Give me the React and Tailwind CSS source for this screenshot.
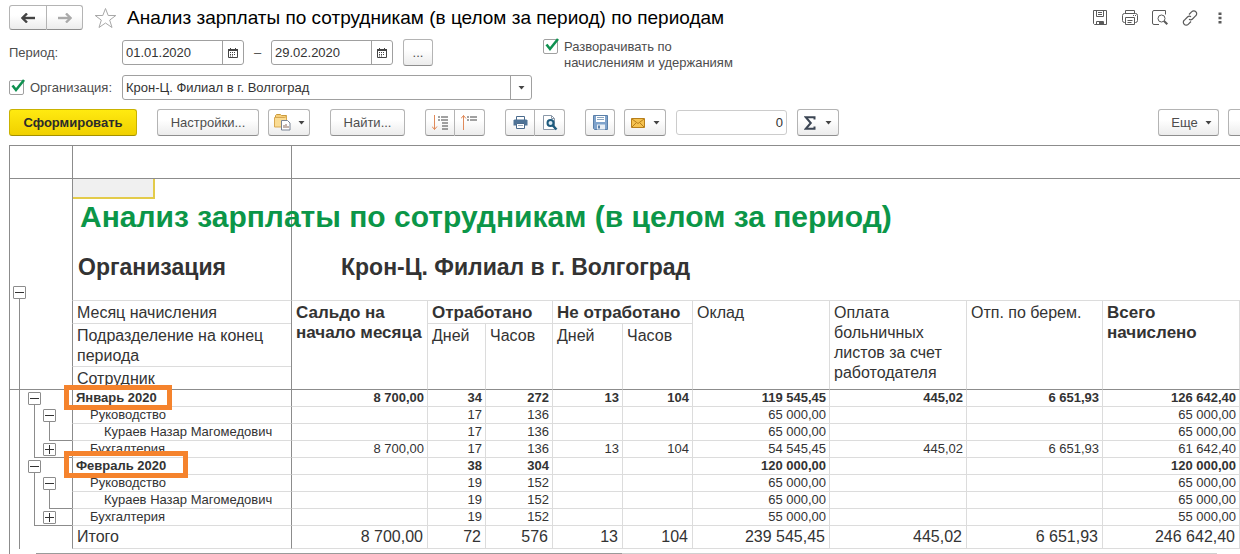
import React from "react";

const rows = [
  { name: "Январь 2020", level: 0, mark: "w-[108px] h-[25px] -top-[5px]", values: ["8 700,00", "34", "272", "13", "104", "119 545,45", "445,02", "6 651,93", "126 642,40"] },
  { name: "Руководство", level: 1, open: true, values: ["", "17", "136", "", "", "65 000,00", "", "", "65 000,00"] },
  { name: "Кураев Назар Магомедович", level: 2, values: ["", "17", "136", "", "", "65 000,00", "", "", "65 000,00"] },
  { name: "Бухгалтерия", level: 1, open: false, values: ["8 700,00", "17", "136", "13", "104", "54 545,45", "445,02", "6 651,93", "61 642,40"] },
  { name: "Февраль 2020", level: 0, mark: "w-[124px] h-[27px] -top-[7px]", values: ["", "38", "304", "", "", "120 000,00", "", "", "120 000,00"] },
  { name: "Руководство", level: 1, open: true, values: ["", "19", "152", "", "", "65 000,00", "", "", "65 000,00"] },
  { name: "Кураев Назар Магомедович", level: 2, values: ["", "19", "152", "", "", "65 000,00", "", "", "65 000,00"] },
  { name: "Бухгалтерия", level: 1, open: false, values: ["", "19", "152", "", "", "55 000,00", "", "", "55 000,00"] },
];

const totals = ["8 700,00", "72", "576", "13", "104", "239 545,45", "445,02", "6 651,93", "246 642,40"];

const indent = ["pl-[3px] font-bold", "pl-[17px]", "pl-[31px]"];

const Button = ({ primary, className = "", children, ...rest }) => (
  <button
    type="button"
    className={`flex shrink-0 items-center justify-center rounded-[3px] border bg-linear-to-b ${
      primary
        ? "border-[#c9b200] border-b-[#a39000] from-[#ffea10] to-[#f0d000] font-bold text-[#2b2b2b]"
        : "border-[#b4b4b4] border-b-[#8e8e8e] from-white from-40% to-[#ececec] text-[#4d4d4d]"
    } ${className}`}
    {...rest}
  >
    {children}
  </button>
);

const Arrow = () => (
  <svg width="7" height="4" viewBox="0 0 7 4" className="shrink-0">
    <path d="M0.5 0h6L3.5 3.6z" fill="#444" />
  </svg>
);

const Check = ({ id }) => (
  <span className="relative block size-[15px] shrink-0">
    <input
      id={id}
      type="checkbox"
      defaultChecked
      className="peer block size-[15px] appearance-none rounded-[2px] border border-[#a0a0a0] bg-white"
    />
    <svg
      className="pointer-events-none invisible absolute -top-px left-0.5 peer-checked:visible"
      width="15"
      height="14"
      viewBox="0 0 15 14"
    >
      <path d="M1.5 6.5l3.5 4.5L13 1" fill="none" stroke="#0f9150" strokeWidth="2.6" />
    </svg>
  </span>
);

const DateField = ({ label, value }) => (
  <div className="flex h-[25px] w-[122px] shrink-0 rounded-[3px] border border-[#a0a0a0] bg-white">
    <input aria-label={label} defaultValue={value} className="min-w-0 flex-1 pl-[3px] text-[#333] outline-none" />
    <button type="button" aria-label="Календарь" className="flex w-[21px] items-center justify-center border-l border-[#a0a0a0]">
      <svg width="10" height="10" viewBox="0 0 10 10">
        <path d="M0.5 1.5h9v8h-9z" fill="none" stroke="#444" />
        <path d="M0 1h10v2H0zM2 0h1v2H2zM7 0h1v2H7z" fill="#444" />
        <path d="M2 4.5h6M2 6.5h6" stroke="#444" strokeDasharray="1 1" />
        <path d="M2 8h4" stroke="#444" strokeDasharray="1 1" />
      </svg>
    </button>
  </div>
);

const Toggle = ({ open = true }) => (
  <button
    type="button"
    aria-label={open ? "Свернуть" : "Развернуть"}
    className="flex size-[13px] shrink-0 items-center justify-center rounded-[1px] border border-[#8c8c8c] bg-white"
  >
    <svg width="9" height="9" viewBox="0 0 9 9">
      <path d={open ? "M0 4.5h9" : "M0 4.5h9M4.5 0v9"} stroke="#333" />
    </svg>
  </button>
);

// vertical guide of one nesting level
const Line = () => (
  <span className="flex w-[15px] shrink-0 justify-center">
    <span className="h-full w-px bg-[#8c8c8c]" />
  </span>
);

const Node = () => (
  <span className="flex w-[15px] shrink-0 flex-col items-center pt-[2px]">
    <Toggle />
    <span className="w-px flex-1 bg-[#8c8c8c]" />
  </span>
);

const Corner = ({ children }) => (
  <span className="ml-[7px] flex flex-1 border-b border-l border-[#8c8c8c]">{children}</span>
);

const Tree = ({ row }) => (
  <div className="flex h-[17px] pl-[2px]">
    <Line />
    {row.level === 0 && <Node />}
    {row.level === 1 && row.open && (
      <>
        <Line />
        <Node />
      </>
    )}
    {row.level === 1 && !row.open && (
      <Corner>
        <span className="pl-[8px] pt-[2px]">
          <Toggle open={false} />
        </span>
      </Corner>
    )}
    {row.level === 2 && (
      <>
        <Line />
        <Corner />
      </>
    )}
  </div>
);

const HeaderIcons = () => (
  <div className="ml-auto flex items-center gap-[14px] pr-3 text-[#5a5a5a]">
    <button type="button" aria-label="Сохранить">
      <svg width="16" height="16" viewBox="0 0 16 16" fill="none" stroke="currentColor">
        <path d="M1.5 0.5h13v14h-12l-1-1z" />
        <path d="M4.5 0.5v6h7v-6M6 2.5h4M6 4.5h4M4.5 14.5v-3h7v3" />
        <path d="M7 12h4v2H7z" fill="currentColor" stroke="none" />
      </svg>
    </button>
    <button type="button" aria-label="Печать">
      <svg width="16" height="16" viewBox="0 0 16 16" fill="none" stroke="currentColor">
        <path d="M3.5 3.5v-3h9v3M3.5 12.5h-1q-2 0-2-2v-5q0-2 2-2h11q2 0 2 2v5q0 2-2 2h-1" />
        <path d="M3.5 7.5h9v7h-9zM5.5 10.5h5M5.5 12.5h4M11 5.5h1M13 5.5h1" />
      </svg>
    </button>
    <button type="button" aria-label="Просмотр">
      <svg width="16" height="16" viewBox="0 0 16 16" fill="none" stroke="currentColor">
        <path d="M7 14.5H2q-1.5 0-1.5-1.5v-11q0-1.5 1.5-1.5h11.5v4" />
        <circle cx="9.5" cy="8.5" r="3.5" />
        <path d="M12 11l3.300 3.300" strokeWidth="2" />
      </svg>
    </button>
    <button type="button" aria-label="Ссылка">
      <svg width="16" height="16" viewBox="0 0 16 16" fill="none" stroke="currentColor" strokeWidth="1.2">
        <path d="M7 4.500L9.800 1.700a2.700 2.700 0 0 1 4 0a2.700 2.700 0 0 1 0 4L10.500 9a2.700 2.700 0 0 1-3.500 0.300" />
        <path d="M9 11.500L6.200 14.300a2.700 2.700 0 0 1-4 0a2.700 2.700 0 0 1 0-4L5.500 7a2.700 2.700 0 0 1 3.500-0.300" />
      </svg>
    </button>
    <button type="button" aria-label="Меню" className="flex w-4 justify-center">
      <svg width="4" height="12" viewBox="0 0 4 12" fill="currentColor">
        <path d="M0.500 0.500h3v2.500h-3zM0.500 4.800h3v2.500h-3zM0.500 9h3v2.500h-3z" />
      </svg>
    </button>
  </div>
);

const Toolbar = () => (
  <div className="flex items-center">
    <Button primary className="h-[27px] w-32">
      Сформировать
    </Button>
    <Button className="ml-5 h-[27px] w-[102px]">Настройки...</Button>
    <Button aria-label="Варианты отчета" className="ml-[9px] h-[27px] w-[42px] gap-[7px]">
      <svg width="17" height="17" viewBox="0 0 17 17">
        <path d="M1.500 3V1.500l1-1h4l1 1h5V4h-11z" fill="#f7cf7a" stroke="#c99a3d" />
        <path d="M0.500 3.500h10l2-1v10.500h-12z" fill="#fadc94" stroke="#d8a850" />
        <path d="M7.500 6.500h6l2.500 2.500v7H7.500z" fill="#fff" stroke="#7a8494" />
        <path d="M10 14v-3M12 14v-4M14 14v-2" stroke="#8a6a5a" />
      </svg>
      <Arrow />
    </Button>
    <Button className="ml-5 h-[27px] w-[75px]">Найти...</Button>
    <div className="ml-5 flex">
      <Button aria-label="Развернуть группы" className="h-[27px] w-[30px] rounded-r-none">
        <svg width="17" height="16" viewBox="0 0 17 16" fill="none">
          <path d="M2.500 0v14.500M0 11.500l2.500 3l2.500-3" stroke="#e08a5a" />
          <path d="M6 2h2M6 5h2" stroke="#444" />
          <path d="M9 2h7M9 5h7M10 8h6M10 11h6M10 14h6" stroke="#444" />
        </svg>
      </Button>
      <Button aria-label="Свернуть группы" className="h-[27px] w-[30px] rounded-l-none border-l-0">
        <svg width="17" height="16" viewBox="0 0 17 16" fill="none">
          <path d="M2.500 0.500V15M0 3.500l2.500-3l2.500 3" stroke="#e08a5a" />
          <path d="M6 2h2M6 5h2" stroke="#444" />
          <path d="M9 2h7M9 5h7" stroke="#444" />
        </svg>
      </Button>
    </div>
    <div className="ml-5 flex">
      <Button aria-label="Печать" className="h-[27px] w-[30px] rounded-r-none">
        <svg width="15" height="15" viewBox="0 0 15 15">
          <path d="M3.500 1.500h8v4h-8z" fill="#fff" stroke="#4a6a8c" />
          <path d="M1.500 4.500h12l1 1v5h-14v-5z" fill="#4f7396" />
          <path d="M3.500 8.500h8v5h-8z" fill="#fff" stroke="#4a6a8c" />
          <path d="M5 10.500h5" stroke="#9ab" />
        </svg>
      </Button>
      <Button aria-label="Предварительный просмотр" className="h-[27px] w-[30px] rounded-l-none border-l-0">
        <svg width="16" height="16" viewBox="0 0 16 16">
          <path d="M1.500 0.500h8l3 3v11h-11z" fill="#fff" stroke="#8a98a8" />
          <path d="M9.500 0.500v3h3" fill="none" stroke="#8a98a8" />
          <circle cx="8.500" cy="8" r="3" fill="#dcebf5" stroke="#1d5a7d" strokeWidth="2" />
          <path d="M10.800 10.500l3.700 4" stroke="#1d5a7d" strokeWidth="2.500" />
        </svg>
      </Button>
    </div>
    <Button aria-label="Сохранить" className="ml-5 h-[27px] w-[30px]">
      <svg width="15" height="15" viewBox="0 0 15 15">
        <path d="M0.500 0.500h14v14h-13l-1-1z" fill="#7fa3cc" stroke="#5a7fa8" />
        <path d="M3 1h9v6H3z" fill="#fff" />
        <path d="M4 2.500h7M4 4.500h7" stroke="#8aa5bf" />
        <path d="M4 9.500h8v5H4z" fill="#e8eef5" />
        <path d="M5 10.500h2v3H5z" fill="#5a7fa8" />
      </svg>
    </Button>
    <Button aria-label="Отправить" className="ml-[9px] h-[27px] w-[42px] gap-[8px]">
      <svg width="14" height="10" viewBox="0 0 14 10">
        <path d="M0.500 0.500h13v9H0.500z" fill="#f5c250" stroke="#b87f1a" />
        <path d="M1 1l6 4.500L13 1M1 9l4-4M13 9l-4-4" fill="none" stroke="#b87f1a" />
      </svg>
      <Arrow />
    </Button>
    <input
      aria-label="Сумма"
      defaultValue="0"
      className="ml-[10px] h-[25px] w-[111px] rounded-[3px] border border-[#ccc] pr-[3px] text-right text-[#333] outline-none"
    />
    <Button aria-label="Сумма ячеек" className="ml-[10px] h-[27px] w-[42px] gap-[9px]">
      <svg width="12" height="14" viewBox="0 0 12 14">
        <path d="M10.500 3.500V1.200H1.800l5 5.800l-5 5.800h8.700v-2.300" fill="none" stroke="#3c4654" strokeWidth="2" />
      </svg>
      <Arrow />
    </Button>
    <Button className="ml-auto h-[27px] w-[61px] gap-[7px] pl-[6px]">
      Еще
      <Arrow />
    </Button>
    <Button aria-label="Справка" className="ml-[9px] h-[27px] w-3 rounded-r-none border-r-0" />
  </div>
);

const head = "border-r border-b border-[#dcdcdc] px-1 pt-[2px] text-left align-top font-normal leading-5";

const Report = () => (
  <table className="w-full table-fixed border-separate border-spacing-0 text-[#333]">
    <colgroup>
      <col className="w-[63px]" />
      <col className="w-[219px]" />
      <col className="w-[137px]" />
      <col className="w-[58px]" />
      <col className="w-[67px]" />
      <col className="w-[70px]" />
      <col className="w-[70px]" />
      <col className="w-[137px]" />
      <col className="w-[137px]" />
      <col className="w-[136px]" />
      <col className="w-[137px]" />
    </colgroup>
    <thead className="text-base">
      <tr className="h-[34px]">
        <td className="border-y border-l border-[#8c8c8c]" />
        <td className="border-y border-l border-[#8c8c8c]" />
        <td colSpan={9} className="border-y border-l border-[#8c8c8c]" />
      </tr>
      <tr className="h-5">
        <td className="border-l border-[#8c8c8c]" />
        <td className="border-l border-[#8c8c8c] p-0">
          <div className="h-5 w-[82px] border-r-2 border-b-2 border-[#e3cb4a] bg-[#f0f0f0]" />
        </td>
        <td colSpan={9} className="border-l border-[#8c8c8c]" />
      </tr>
      <tr className="h-9">
        <td className="border-l border-[#8c8c8c]" />
        <td className="border-l border-[#8c8c8c] p-0 pl-[7px]">
          <h2 className="w-0 text-[30px] leading-9 font-bold whitespace-nowrap text-[#0b9648]">
            Анализ зарплаты по сотрудникам (в целом за период)
          </h2>
        </td>
        <td colSpan={9} className="border-l border-[#8c8c8c]" />
      </tr>
      <tr className="h-[66px] text-[23px] font-bold">
        <td className="border-l border-[#8c8c8c] p-0">
          <div className="ml-[2px] flex h-[66px] w-[15px] flex-col items-center justify-end">
            <Toggle />
            <span className="h-[2px] w-px bg-[#8c8c8c]" />
          </div>
        </td>
        <td className="border-b border-l border-b-[#dcdcdc] border-l-[#8c8c8c] p-0 pl-[5px]">Организация</td>
        <td colSpan={9} className="border-b border-l border-b-[#dcdcdc] border-l-[#8c8c8c] p-0 pl-[49px]">
          Крон-Ц. Филиал в г. Волгоград
        </td>
      </tr>
      <tr className="h-[23px]">
        <td rowSpan={3} className="border-b border-l border-[#8c8c8c] p-0">
          <div className="flex h-[88px] pl-[2px]">
            <Line />
          </div>
        </td>
        <th className={`${head} border-r-0 border-l border-l-[#8c8c8c]`}>Месяц начисления</th>
        <th rowSpan={3} className={`${head} border-l border-b-[#8c8c8c] border-l-[#8c8c8c]`}>
          <b className="text-[17px]">Сальдо на начало месяца</b>
        </th>
        <th colSpan={2} className={head}>
          <b className="text-[17px]">Отработано</b>
        </th>
        <th colSpan={2} className={`${head} whitespace-nowrap`}>
          <b className="text-[17px]">Не отработано</b>
        </th>
        <th rowSpan={3} className={`${head} border-b-[#8c8c8c]`}>Оклад</th>
        <th rowSpan={3} className={`${head} border-b-[#8c8c8c]`}>Оплата больничных листов за счет работодателя</th>
        <th rowSpan={3} className={`${head} border-b-[#8c8c8c]`}>Отп. по берем.</th>
        <th rowSpan={3} className={`${head} border-b-[#8c8c8c]`}>
          <b className="text-[17px]">Всего начислено</b>
        </th>
      </tr>
      <tr className="h-[43px]">
        <th className={`${head} border-r-0 border-l border-l-[#8c8c8c]`}>Подразделение на конец периода</th>
        <th rowSpan={2} className={`${head} border-b-[#8c8c8c]`}>Дней</th>
        <th rowSpan={2} className={`${head} border-b-[#8c8c8c]`}>Часов</th>
        <th rowSpan={2} className={`${head} border-b-[#8c8c8c]`}>Дней</th>
        <th rowSpan={2} className={`${head} border-b-[#8c8c8c]`}>Часов</th>
      </tr>
      <tr className="h-[23px]">
        <th className={`${head} border-r-0 border-l border-b-[#8c8c8c] border-l-[#8c8c8c]`}>Сотрудник</th>
      </tr>
    </thead>
    <tbody className="text-[13px] leading-4">
      {rows.map((row, index) => (
        <tr key={index} className="h-[17px]">
          <td className="border-l border-[#8c8c8c] p-0">
            <Tree row={row} />
          </td>
          <td
            className={`relative border-b border-l border-b-[#dcdcdc] border-l-[#8c8c8c] py-0 pr-0 whitespace-nowrap ${indent[row.level]}`}
          >
            {row.name}
            {row.mark && (
              <span className={`pointer-events-none absolute -left-[9px] z-10 border-[5px] border-[#f5832d] ${row.mark}`} />
            )}
          </td>
          {row.values.map((value, i) => (
            <td
              key={i}
              className={`border-r border-b border-[#dcdcdc] py-0 pr-[3px] pl-0 text-right ${
                i === 0 ? "border-l border-l-[#8c8c8c]" : ""
              } ${row.level === 0 ? "font-bold" : ""}`}
            >
              {value}
            </td>
          ))}
        </tr>
      ))}
    </tbody>
    <tfoot className="text-base leading-5">
      <tr className="h-[23px]">
        <td className="border-l border-[#8c8c8c] p-0">
          <div className="flex h-[23px] pl-[2px]">
            <Line />
          </div>
        </td>
        <td className="border-b border-l border-b-[#dcdcdc] border-l-[#8c8c8c] py-0 pl-1">Итого</td>
        {totals.map((value, i) => (
          <td
            key={i}
            className={`border-r border-b border-[#dcdcdc] py-0 pr-1 pl-0 text-right whitespace-nowrap ${
              i === 0 ? "border-l border-l-[#8c8c8c]" : ""
            }`}
          >
            {value}
          </td>
        ))}
      </tr>
    </tfoot>
  </table>
);

const App = () => {
  return (
    <div className="overflow-hidden bg-white pt-[5px] pl-[9px] font-['Liberation_Sans',Arial,sans-serif] text-[13px] leading-4 text-[#4d4d4d]">
      <div className="flex flex-col gap-[9px]">
        <header className="flex h-[25px] items-center">
          <div className="flex">
            <Button aria-label="Назад" className="h-[25px] w-[38px] rounded-r-none">
              <svg width="14" height="10" viewBox="0 0 14 10">
                <path d="M14 5H2" stroke="#444" strokeWidth="2.400" />
                <path d="M6 0.500L1.500 5L6 9.500" fill="none" stroke="#444" strokeWidth="2.400" />
              </svg>
            </Button>
            <Button aria-label="Вперед" className="h-[25px] w-[36px] rounded-l-none border-l-0">
              <svg width="14" height="10" viewBox="0 0 14 10">
                <path d="M0 5h12" stroke="#aaa" strokeWidth="2.400" />
                <path d="M8 0.500L12.500 5L8 9.500" fill="none" stroke="#aaa" strokeWidth="2.400" />
              </svg>
            </Button>
          </div>
          <button type="button" aria-label="В избранное" className="ml-[11px]">
            <svg width="23" height="22" viewBox="0 0 23 22">
              <path
                d="M11.500 1.500l2.700 7h7.600l-6.100 4.600l2.300 7.400l-6.500-4.500L5 20.500l2.300-7.400L1.200 8.500h7.600z"
                fill="#fff"
                stroke="#a8a8a8"
              />
            </svg>
          </button>
          <h1 className="ml-[10px] text-[19px] leading-6 whitespace-nowrap text-black">
            Анализ зарплаты по сотрудникам (в целом за период) по периодам
          </h1>
          <HeaderIcons />
        </header>

        <div className="flex h-[27px] items-center">
          <span className="w-[113px]">Период:</span>
          <DateField label="Начало периода" value="01.01.2020" />
          <span className="w-[27px] text-center">–</span>
          <DateField label="Конец периода" value="29.02.2020" />
          <Button aria-label="Выбрать период" className="ml-[10px] h-[27px] w-[30px]">...</Button>
          <div className="ml-[110px] flex gap-[6px] self-start">
            <Check id="expand" />
            <label htmlFor="expand" className="whitespace-nowrap">
              Разворачивать по
              <br />
              начислениям и удержаниям
            </label>
          </div>
        </div>

        <div className="flex h-[25px] items-center">
          <div className="flex w-[113px] items-center gap-[6px]">
            <Check id="org-on" />
            <label htmlFor="org-on">Организация:</label>
          </div>
          <div className="relative h-[25px] w-[410px]">
            <select
              aria-label="Организация"
              className="h-[25px] w-full appearance-none rounded-[3px] border border-[#a0a0a0] bg-white pl-[3px] text-[#333] outline-none"
            >
              <option>Крон-Ц. Филиал в г. Волгоград</option>
            </select>
            <span className="pointer-events-none absolute inset-y-0 right-0 flex w-[22px] items-center justify-center border-l border-[#a0a0a0]">
              <Arrow />
            </span>
          </div>
        </div>

        <Toolbar />

        <div>
          <Report />
          <div className="flex h-[5px] items-end border-l border-[#8c8c8c] pl-[26px]">
            <span className="h-px w-[586px] bg-[#9a9a9a]" />
            <span className="mr-[23px] h-px flex-1 bg-[#d0d0d0]" />
          </div>
        </div>
      </div>
    </div>
  );
};

export default App;
